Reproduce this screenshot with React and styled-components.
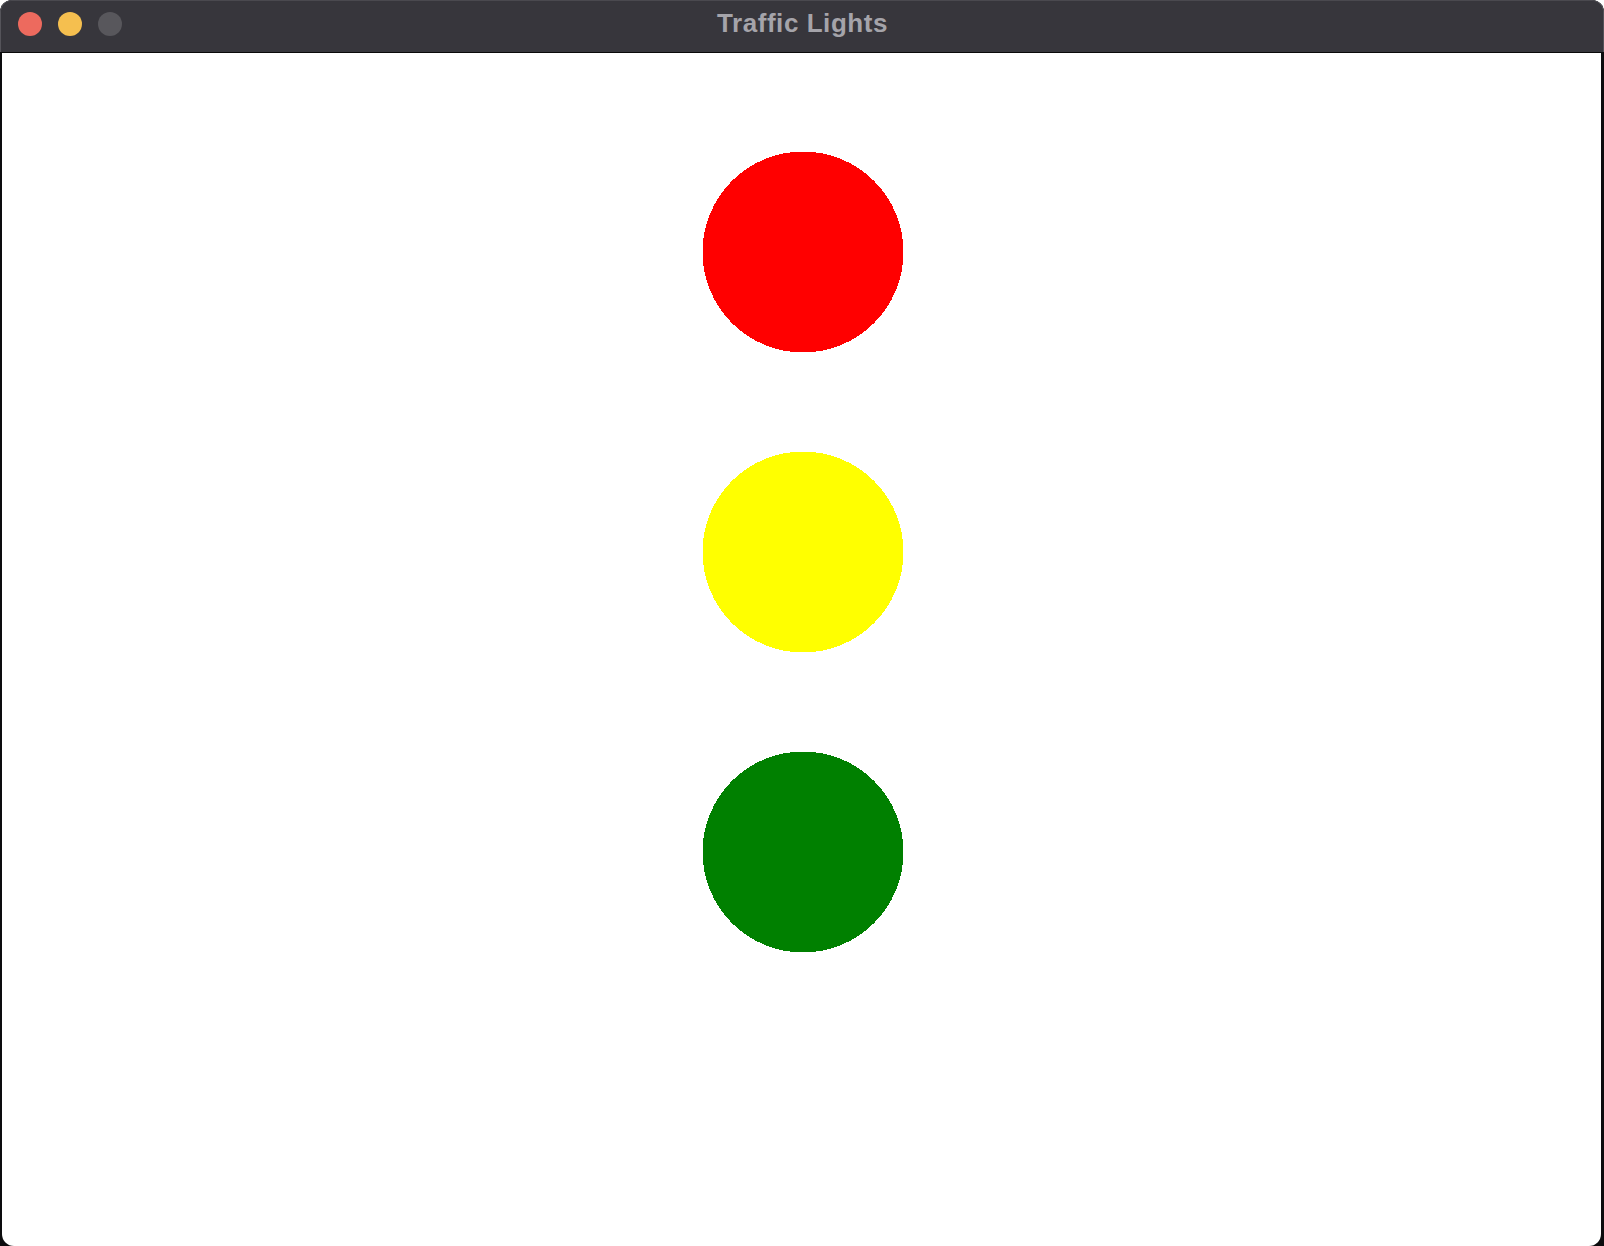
import React from "react";
import styled, { createGlobalStyle } from "styled-components";

const Global = createGlobalStyle`
  html, body {
    margin: 0;
    padding: 0;
    background: #ffffff;
  }
  #root {
    height: 1246px;
  }
`;

const Frame = styled.div`
  height: 1246px;
  box-sizing: border-box;
  display: flex;
  flex-direction: column;
  background: #0c0c0e;
  border-radius: 12px 12px 0 0;
  padding: 0 3px 0 2px;
  overflow: hidden;
`;

const TitleBar = styled.div`
  position: relative;
  height: 52px;
  flex: none;
  margin: 0 -3px 0 -2px;
  padding: 0 3px 0 2px;
  background: #37363c;
  border-radius: 12px 12px 0 0;
  border-bottom: 1px solid #0a0a0a;
  display: flex;
  align-items: center;
  justify-content: center;
  box-shadow: inset 1px 0 0 #55545a, inset -1px 0 0 #55545a, inset 0 1px 0 #4a494f;
`;

const Buttons = styled.div`
  position: absolute;
  left: 18px;
  top: 12px;
  display: flex;
  gap: 16px;
`;

const Dot = styled.span`
  width: 24px;
  height: 24px;
  border-radius: 50%;
  background: ${(p) => p.$color};
`;

const Title = styled.div`
  font-family: "Liberation Sans", Arial, sans-serif;
  font-weight: 700;
  font-size: 26px;
  letter-spacing: 0.55px;
  color: #a5a4aa;
  margin-top: -5px;
  margin-left: 2px;
`;

const Content = styled.div`
  flex: 1;
  background: #ffffff;
  border-radius: 0 0 12px 12px;
  display: flex;
  flex-direction: column;
  align-items: center;
  padding-top: 98px;
  padding-left: 2px;
  gap: 98px;
`;

const Light = styled.svg`
  display: block;
  width: 202px;
  height: 202px;
`;

function Lamp({ color }) {
  return (
    <Light viewBox="0 0 202 202" shapeRendering="crispEdges">
      <circle cx="101" cy="101" r="100.5" fill={color} />
    </Light>
  );
}

export default function App() {
  return (
    <>
      <Global />
      <Frame>
        <TitleBar>
          <Buttons>
            <Dot $color="#ed6a5e" />
            <Dot $color="#f5bf4f" />
            <Dot $color="#58575c" />
          </Buttons>
          <Title>Traffic Lights</Title>
        </TitleBar>
        <Content>
          <Lamp color="#ff0000" />
          <Lamp color="#ffff00" />
          <Lamp color="#008000" />
        </Content>
      </Frame>
    </>
  );
}
